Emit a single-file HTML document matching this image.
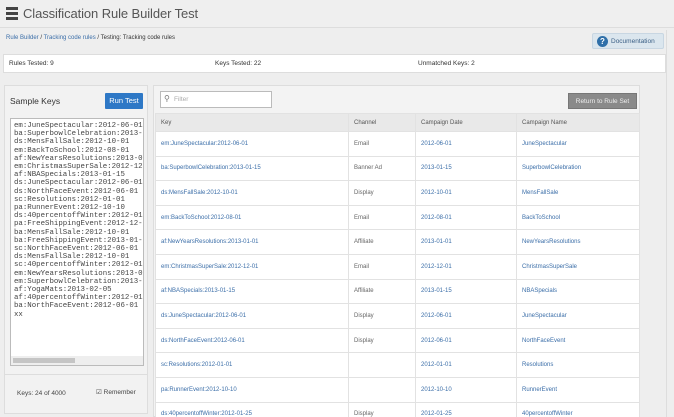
<!DOCTYPE html>
<html><head><style>
*{box-sizing:border-box;margin:0;padding:0}
html,body{width:674px;height:417px;overflow:hidden}
body{background:#eeeeee;font-family:"Liberation Sans",sans-serif;position:relative;color:#444}
.a{position:absolute}
.hdr{left:0;top:0;width:674px;height:28px;background:#efefef;border-bottom:1px solid #ddd}
.t{left:23px;top:6px;font-size:13px;color:#555;letter-spacing:-0.1px}
.bc{left:6px;top:35px;font-size:6px;color:#333}
.bc span{color:#3b6ea8}
.doc{left:592px;top:33px;width:72px;height:16px;background:#dbe6ee;border:1px solid #c8d6e2;border-radius:2px;font-size:6.5px;color:#3b5f85;padding:4px 0 0 18px}
.doc i{position:absolute;left:4px;top:2px;width:11px;height:11px;border-radius:50%;background:#2f6fa8;color:#fff;font-style:normal;font-size:8px;font-weight:bold;text-align:center;line-height:11px}
.stats{left:3px;top:54px;width:663px;height:19px;background:#fff;border:1px solid #ddd;font-size:6.5px;color:#333}
.stats div{position:absolute;top:5px}
.lp{left:4px;top:85px;width:144px;height:329px;background:#f2f2f2;border:1px solid #ddd}
.rb{left:105px;top:93px;width:38px;height:16px;background:#2e78c6;color:#fff;font-size:7.5px;text-align:center;line-height:16px;border-radius:1px}
.ta{left:10px;top:118px;width:134px;height:248px;background:#fff;border:1px solid #bbb;font-family:"Liberation Mono",monospace;font-size:7.4px;line-height:8.2px;color:#444;padding:3px 0 0 3px;white-space:pre;overflow:hidden}
.sb{left:11px;top:356px;width:132px;height:9px;background:#eee}
.sb div{position:absolute;left:2px;top:2px;width:62px;height:5px;background:#c5c5c5}
.rp{left:153px;top:85px;width:487px;height:332px;background:#f3f3f3;border:1px solid #ddd}
.flt{left:160px;top:91px;width:112px;height:17px;background:#fff;border:1px solid #bbb;font-size:6.5px;color:#aaa;padding:4px 0 0 13px}
.ret{left:568px;top:93px;width:69px;height:16px;background:#8a8a8a;border:1px solid #777;color:#eee;font-size:6.5px;text-align:center;line-height:15px}
.tw{left:155px;top:113px;width:485px;height:304px;overflow:hidden}
table{width:485px;border-collapse:collapse;font-size:6px;table-layout:fixed}
td,th{border:1px solid #e2e2e2;padding:0 0 0 5px;text-align:left;font-weight:normal;white-space:nowrap;overflow:hidden}
th{background:#e9e9e9;color:#555;height:18px}
td{background:#fff;height:24.6px;color:#3b6ea8}
td.c{color:#666}
</style></head><body>
<div class="a hdr"></div>
<div class="a" style="left:6px;top:7px;width:12px;height:3px;background:#444"></div>
<div class="a" style="left:6px;top:12px;width:12px;height:3px;background:#444"></div>
<div class="a" style="left:6px;top:17px;width:12px;height:3px;background:#444"></div>
<div class="a t">Classification Rule Builder Test</div>
<div class="a bc"><span>Rule Builder</span> / <span>Tracking code rules</span> / Testing: Tracking code rules</div>
<div class="a doc"><i>?</i>Documentation</div>
<div class="a stats"><div style="left:5px">Rules Tested: 9</div><div style="left:211px">Keys Tested: 22</div><div style="left:414px">Unmatched Keys: 2</div></div>
<div class="a lp"></div>
<div class="a" style="left:10px;top:96px;font-size:8.5px;color:#333">Sample Keys</div>
<div class="a rb">Run Test</div>
<div class="a ta">em:JuneSpectacular:2012-06-01
ba:SuperbowlCelebration:2013-
ds:MensFallSale:2012-10-01
em:BackToSchool:2012-08-01
af:NewYearsResolutions:2013-0
em:ChristmasSuperSale:2012-12
af:NBASpecials:2013-01-15
ds:JuneSpectacular:2012-06-01
ds:NorthFaceEvent:2012-06-01
sc:Resolutions:2012-01-01
pa:RunnerEvent:2012-10-10
ds:40percentoffWinter:2012-01
pa:FreeShippingEvent:2012-12-
ba:MensFallSale:2012-10-01
ba:FreeShippingEvent:2013-01-
sc:NorthFaceEvent:2012-06-01
ds:MensFallSale:2012-10-01
sc:40percentoffWinter:2012-01
em:NewYearsResolutions:2013-0
em:SuperbowlCelebration:2013-
af:YogaMats:2013-02-05
af:40percentoffWinter:2012-01
ba:NorthFaceEvent:2012-06-01
xx</div>
<div class="a sb"><div></div></div>
<div class="a" style="left:5px;top:374px;width:142px;height:1px;background:#ddd"></div>
<div class="a" style="left:17px;top:390px;font-size:6.5px;color:#444">Keys: 24 of 4000</div>
<div class="a" style="left:96px;top:388px;font-size:6.5px;color:#444">&#9745; Remember</div>
<div class="a rp"></div>
<div class="a flt">Filter<span style="position:absolute;left:3px;top:2px;color:#777;font-size:8px">&#9906;</span></div>
<div class="a ret">Return to Rule Set</div>
<div class="a tw"><table>
<tr><th style="width:193px">Key</th><th style="width:67px">Channel</th><th style="width:101px">Campaign Date</th><th>Campaign Name</th></tr>
<tr><td>em:JuneSpectacular:2012-06-01</td><td class="c">Email</td><td>2012-06-01</td><td>JuneSpectacular</td></tr>
<tr><td>ba:SuperbowlCelebration:2013-01-15</td><td class="c">Banner Ad</td><td>2013-01-15</td><td>SuperbowlCelebration</td></tr>
<tr><td>ds:MensFallSale:2012-10-01</td><td class="c">Display</td><td>2012-10-01</td><td>MensFallSale</td></tr>
<tr><td>em:BackToSchool:2012-08-01</td><td class="c">Email</td><td>2012-08-01</td><td>BackToSchool</td></tr>
<tr><td>af:NewYearsResolutions:2013-01-01</td><td class="c">Affiliate</td><td>2013-01-01</td><td>NewYearsResolutions</td></tr>
<tr><td>em:ChristmasSuperSale:2012-12-01</td><td class="c">Email</td><td>2012-12-01</td><td>ChristmasSuperSale</td></tr>
<tr><td>af:NBASpecials:2013-01-15</td><td class="c">Affiliate</td><td>2013-01-15</td><td>NBASpecials</td></tr>
<tr><td>ds:JuneSpectacular:2012-06-01</td><td class="c">Display</td><td>2012-06-01</td><td>JuneSpectacular</td></tr>
<tr><td>ds:NorthFaceEvent:2012-06-01</td><td class="c">Display</td><td>2012-06-01</td><td>NorthFaceEvent</td></tr>
<tr><td>sc:Resolutions:2012-01-01</td><td class="c"></td><td>2012-01-01</td><td>Resolutions</td></tr>
<tr><td>pa:RunnerEvent:2012-10-10</td><td class="c"></td><td>2012-10-10</td><td>RunnerEvent</td></tr>
<tr><td>ds:40percentoffWinter:2012-01-25</td><td class="c">Display</td><td>2012-01-25</td><td>40percentoffWinter</td></tr>
</table></div>
<div class="a" style="left:666px;top:30px;width:1px;height:387px;background:#ddd"></div>
</body></html>
